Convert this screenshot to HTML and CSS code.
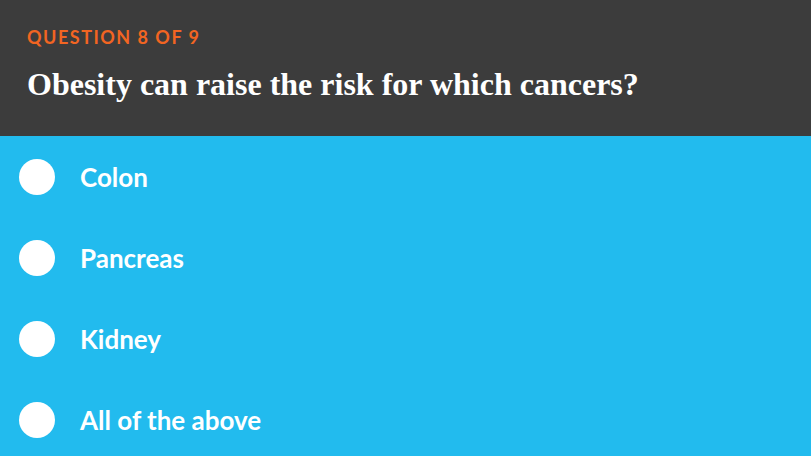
FILE: index.html
```html
<!DOCTYPE html>
<html lang="en">
<head>
  <meta charset="UTF-8" />
  <title>Quiz</title>
  <link rel="stylesheet" href="styles.css">
</head>
<body>
  <!-- Question header -->
  <div class="quiz-header">
    <p class="counter">Question 8 of 9</p>
    <h1>Obesity can raise the risk for which cancers?</h1>
  </div>

  <!-- Answer options -->
  <ul class="answers">
    <li><span class="dot"></span>Colon</li>
    <li><span class="dot"></span>Pancreas</li>
    <li><span class="dot"></span>Kidney</li>
    <li><span class="dot"></span>All of the above</li>
  </ul>
</body>
</html>
```

FILE: styles.css
```css
* {
  margin: 0;
  padding: 0;
  box-sizing: border-box;
}

body {
  width: 811px;
  height: 456px;
  overflow: hidden;
  background-color: #22bbee;
  font-family: 'Lato', sans-serif;
}

/* Dark header */
.quiz-header {
  background-color: #3c3c3c;
  height: 136px;
  padding: 27px 27px 0 27px;
}

.counter {
  color: #f26522;
  font-weight: 700;
  font-size: 18px;
  letter-spacing: 1.5px;
  text-transform: uppercase;
  line-height: 20px;
}

h1 {
  margin-top: 19px;
  color: #fff;
  font-family: 'Liberation Serif', serif;
  font-weight: 700;
  font-size: 32px;
  line-height: 36px;
}

/* Options */
.answers {
  list-style: none;
  padding-top: 23px;
}

.answers li {
  display: flex;
  align-items: center;
  gap: 25px;
  height: 36px;
  margin-bottom: 45px;
  padding-left: 19px;
  color: #fff;
  font-weight: 700;
  font-size: 26px;
}

.answers li:last-child {
  margin-bottom: 0;
}

.dot {
  width: 36px;
  height: 36px;
  border-radius: 50%;
  background: #fff;
  flex-shrink: 0;
}
```
